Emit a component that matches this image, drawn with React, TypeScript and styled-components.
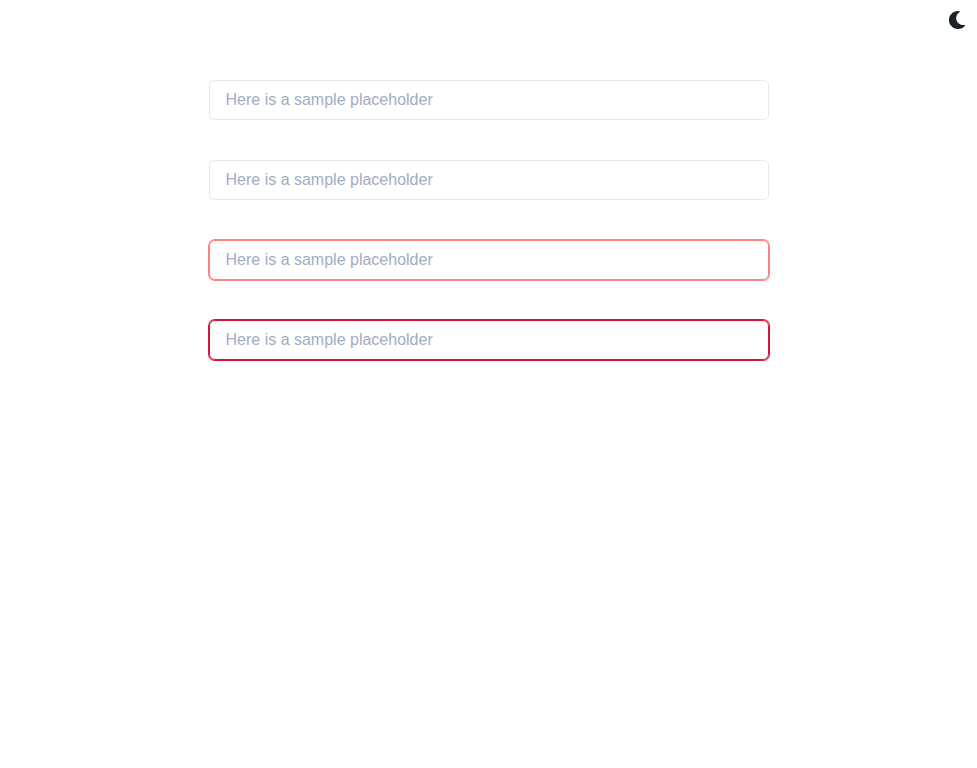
import React from "react";
import styled, { createGlobalStyle } from "styled-components";
import { FaMoon } from "react-icons/fa";

const GlobalStyle = createGlobalStyle`
  *, *::before, *::after { box-sizing: border-box; }
  body {
    margin: 0;
    background: #fff;
    color: #1a202c;
    font-family: Helvetica, Arial, "Liberation Sans", sans-serif;
    line-height: 1.5;
    -webkit-font-smoothing: antialiased;
  }
`;

const Page = styled.div`
  min-height: 100vh;
`;

const TopBar = styled.header`
  display: flex;
  justify-content: flex-end;
  height: 40px;
`;

const ModeButton = styled.button`
  display: flex;
  align-items: center;
  justify-content: center;
  width: 40px;
  height: 40px;
  padding: 0;
  border: 0;
  background: transparent;
  color: #1a202c;
`;

const Fields = styled.main`
  display: flex;
  flex-direction: column;
  gap: 40px;
  width: 560px;
  margin: 40px auto 0;
`;

const Field = styled.input<{ $ring?: string }>`
  width: 100%;
  height: 40px;
  padding: 0 16px;
  border: 1px solid ${(p) => p.$ring ?? "#e2e8f0"};
  border-radius: 6px;
  box-shadow: ${(p) => (p.$ring ? `0 0 0 1px ${p.$ring}` : "none")};
  outline: 0;
  background: transparent;
  color: inherit;
  font-family: inherit;
  font-size: 16px;
  line-height: 1.5;

  &::placeholder {
    color: #a0aec0;
    opacity: 1;
  }
`;

const fields: { id: string; ring?: string }[] = [
  { id: "outline" },
  { id: "default" },
  { id: "light-error", ring: "#fc8181" },
  { id: "crimson-error", ring: "crimson" },
];

export default function App() {
  return (
    <Page>
      <GlobalStyle />
      <TopBar>
        <ModeButton aria-label="Toggle color mode">
          <FaMoon size={18} />
        </ModeButton>
      </TopBar>
      <Fields>
        {fields.map((f) => (
          <Field key={f.id} $ring={f.ring} placeholder="Here is a sample placeholder" />
        ))}
      </Fields>
    </Page>
  );
}
